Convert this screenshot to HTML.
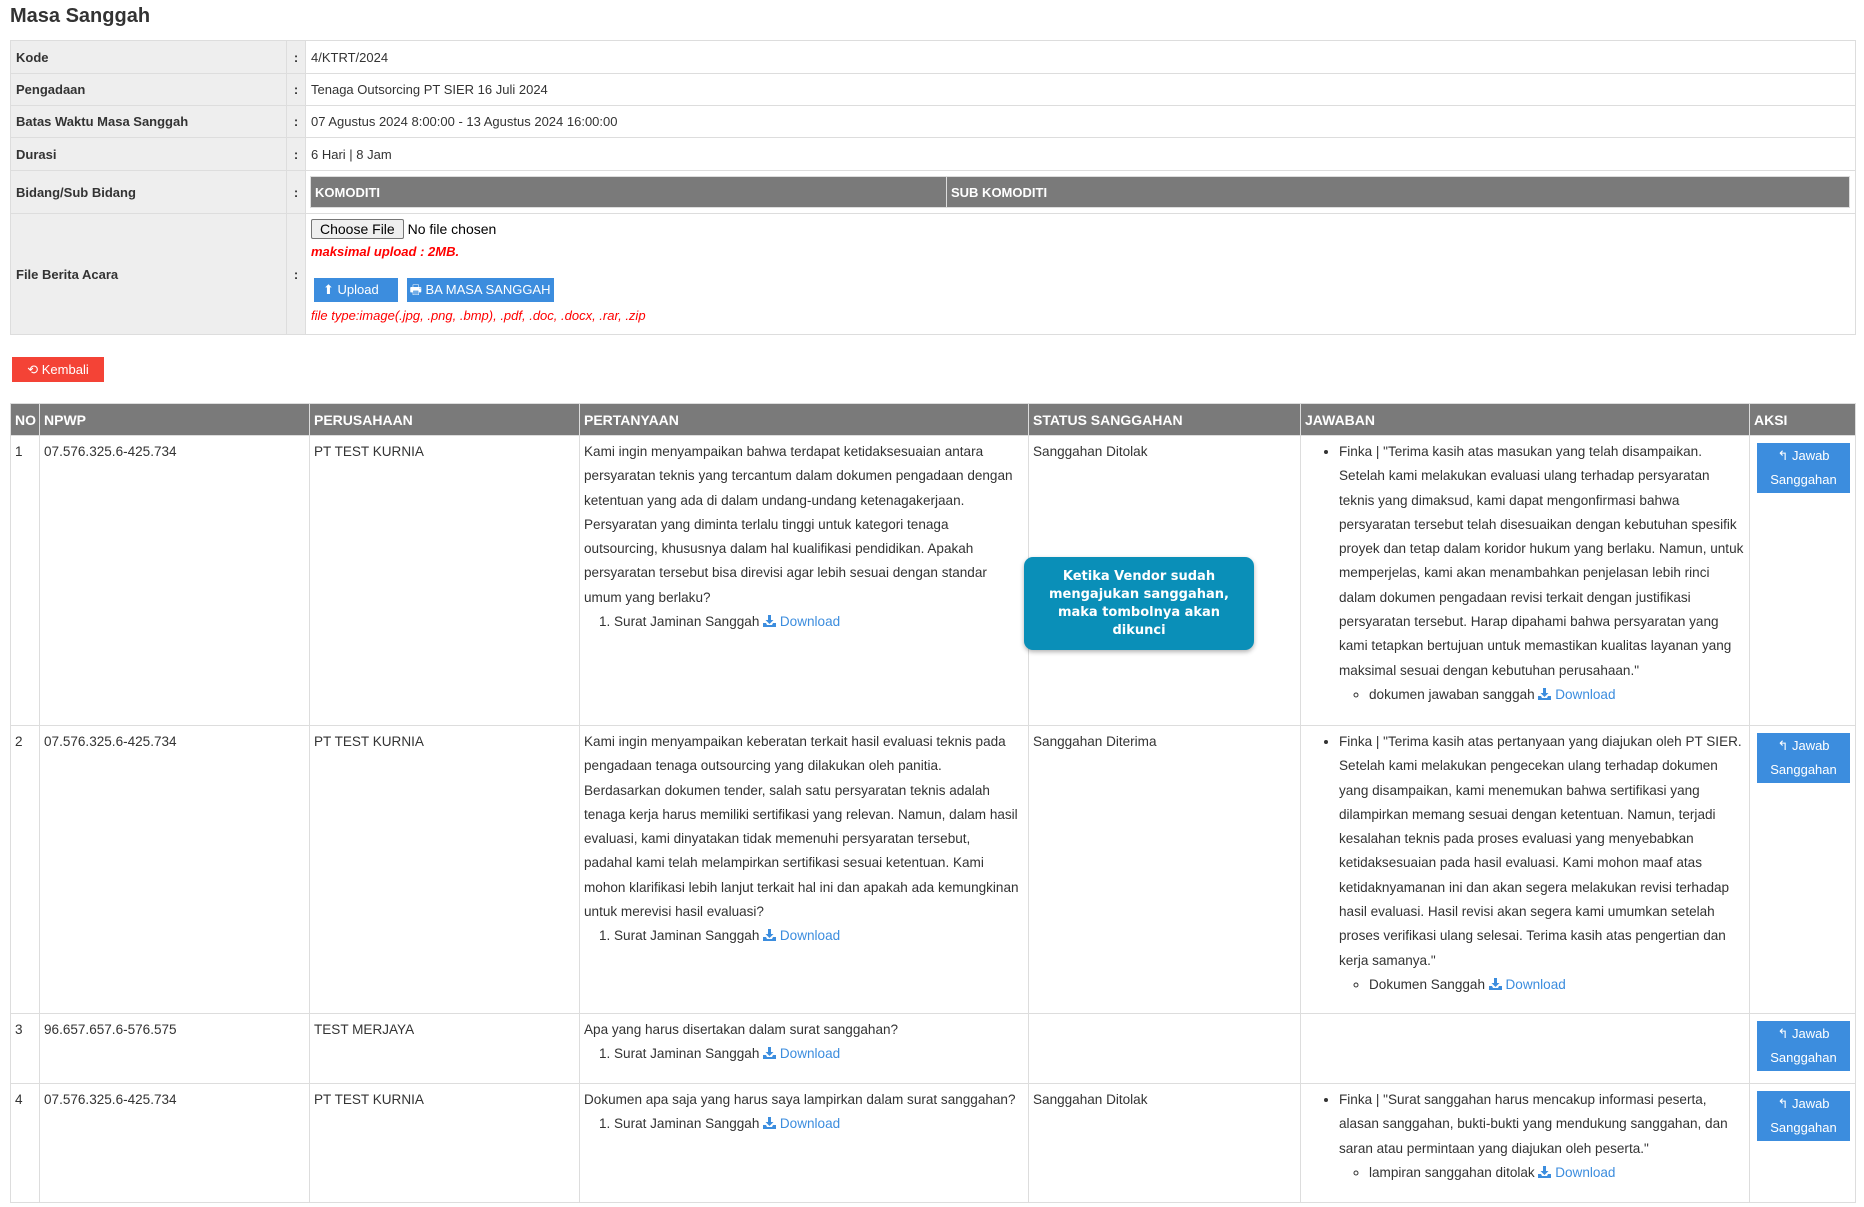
<!DOCTYPE html>
<html><head><meta charset="utf-8"><style>
*{box-sizing:border-box}
body{margin:0;background:#fff;font-family:"Liberation Sans",Arial,sans-serif;font-size:13px;color:#333;width:1864px;height:1207px;overflow:hidden;position:relative}
h3{position:absolute;left:10px;top:5px;margin:0;font-size:20px;font-weight:bold;color:#333}
table{border-collapse:collapse;table-layout:fixed}
.info{position:absolute;left:10px;top:40px;width:1846px}
.info td{border:1px solid #ddd;padding:0 5px;font-size:13px;vertical-align:middle}
.info td.l{background:#eee;font-weight:bold}
.info td.c{background:#eee;text-align:center;font-weight:bold;padding:0}
.kom{width:100%;border-collapse:collapse}
.kom td{background:#7a7a7a;color:#fff;font-weight:bold;height:31px;border:1px solid #ddd !important;padding:0 4px}
.btn{display:inline-block;background:#3c8dde;color:#fff;font-size:13px;height:24px;line-height:24px;padding:0 9px}
.main{position:absolute;left:10px;top:403px;width:1846px}
.main th{background:#7a7a7a;color:#fff;text-align:left;height:32px;padding:0 4px;font-size:14px;border:1px solid #ddd}
.main td{border:1px solid #ddd;vertical-align:top;padding:4px 4px;line-height:24.3px;font-size:13.55px}
ol,ul{margin:0}
ol{padding-left:30px}
ul{padding-left:34px}
ul ul{padding-left:30px;list-style:circle}
a{color:#3c8dde;text-decoration:none}
.jb{display:block;background:#3c8dde;color:#fff;text-align:center;line-height:24px;font-size:13px;width:93px;padding:1px 0;margin:3px 0 0 3px}
.di{display:inline-block;width:13px;height:12px;vertical-align:-1px}
</style></head><body>
<svg width="0" height="0" style="position:absolute"><symbol id="dl" viewBox="0 0 13 12"><path d="M5 0h3v5h2.5L6.5 9 2.5 5H5z" fill="#3c8dde"/><path d="M0 8h3l1 2h5l1-2h3v4H0z" fill="#3c8dde"/></symbol></svg>
<h3>Masa Sanggah</h3>
<table class="info">
<colgroup><col style="width:276px"><col style="width:19px"><col></colgroup>
<tr style="height:33px"><td class="l">Kode</td><td class="c">:</td><td>4/KTRT/2024</td></tr>
<tr style="height:32px"><td class="l">Pengadaan</td><td class="c">:</td><td>Tenaga Outsorcing PT SIER 16 Juli 2024</td></tr>
<tr style="height:32px"><td class="l">Batas Waktu Masa Sanggah</td><td class="c">:</td><td>07 Agustus 2024 8:00:00 - 13 Agustus 2024 16:00:00</td></tr>
<tr style="height:33px"><td class="l">Durasi</td><td class="c">:</td><td>6 Hari | 8 Jam</td></tr>
<tr style="height:43px"><td class="l">Bidang/Sub Bidang</td><td class="c">:</td><td style="padding:5px 5px 5px 4px"><table class="kom"><tr><td style="width:636px">KOMODITI</td><td>SUB KOMODITI</td></tr></table></td></tr>
<tr style="height:121px"><td class="l">File Berita Acara</td><td class="c">:</td><td style="vertical-align:top;padding-top:5px">
<div style="font-size:14px"><span style="display:inline-block;border:1px solid #767676;background:#efefef;border-radius:2px;padding:1px 8px;color:#000">Choose File</span> <span style="color:#000">No file chosen</span></div>
<div style="color:#f00;font-weight:bold;font-style:italic;margin-top:5px">maksimal upload : 2MB.</div>
<div style="margin-top:19px;padding-left:3px"><span class="btn" style="width:84px">⬆ Upload</span> <span class="btn" style="margin-left:5px;padding:0 3px">🖶 BA MASA SANGGAH</span></div>
<div style="color:#f00;font-style:italic;margin-top:6px">file type:image(.jpg, .png, .bmp), .pdf, .doc, .docx, .rar, .zip</div>
</td></tr>
</table>
<div style="position:absolute;left:12px;top:357px;width:92px;height:25px;background:#f44336;color:#fff;font-size:13px;line-height:25px;text-align:center">⟲ Kembali</div>
<table class="main">
<colgroup><col style="width:29px"><col style="width:270px"><col style="width:270px"><col style="width:449px"><col style="width:272px"><col style="width:449px"><col></colgroup>
<tr><th>NO</th><th>NPWP</th><th>PERUSAHAAN</th><th>PERTANYAAN</th><th>STATUS SANGGAHAN</th><th>JAWABAN</th><th>AKSI</th></tr>
<tr style="height:290px"><td>1</td><td>07.576.325.6-425.734</td><td>PT TEST KURNIA</td><td>Kami ingin menyampaikan bahwa terdapat ketidaksesuaian antara persyaratan teknis yang tercantum dalam dokumen pengadaan dengan ketentuan yang ada di dalam undang-undang ketenagakerjaan. Persyaratan yang diminta terlalu tinggi untuk kategori tenaga outsourcing, khususnya dalam hal kualifikasi pendidikan. Apakah persyaratan tersebut bisa direvisi agar lebih sesuai dengan standar umum yang berlaku?<ol><li>Surat Jaminan Sanggah <a><svg class="di"><use href="#dl"/></svg> Download</a></li></ol></td><td>Sanggahan Ditolak</td><td><ul><li>Finka | "Terima kasih atas masukan yang telah disampaikan. Setelah kami melakukan evaluasi ulang terhadap persyaratan teknis yang dimaksud, kami dapat mengonfirmasi bahwa persyaratan tersebut telah disesuaikan dengan kebutuhan spesifik proyek dan tetap dalam koridor hukum yang berlaku. Namun, untuk memperjelas, kami akan menambahkan penjelasan lebih rinci dalam dokumen pengadaan revisi terkait dengan justifikasi persyaratan tersebut. Harap dipahami bahwa persyaratan yang kami tetapkan bertujuan untuk memastikan kualitas layanan yang maksimal sesuai dengan kebutuhan perusahaan."<ul><li>dokumen jawaban sanggah <a><svg class="di"><use href="#dl"/></svg> Download</a></li></ul></li></ul></td><td><span class="jb">↰ Jawab<br>Sanggahan</span></td></tr>
<tr style="height:288px"><td>2</td><td>07.576.325.6-425.734</td><td>PT TEST KURNIA</td><td>Kami ingin menyampaikan keberatan terkait hasil evaluasi teknis pada<br>pengadaan tenaga outsourcing yang dilakukan oleh panitia.<br>Berdasarkan dokumen tender, salah satu persyaratan teknis adalah<br>tenaga kerja harus memiliki sertifikasi yang relevan. Namun, dalam hasil<br>evaluasi, kami dinyatakan tidak memenuhi persyaratan tersebut,<br>padahal kami telah melampirkan sertifikasi sesuai ketentuan. Kami<br>mohon klarifikasi lebih lanjut terkait hal ini dan apakah ada kemungkinan<br>untuk merevisi hasil evaluasi?<ol><li>Surat Jaminan Sanggah <a><svg class="di"><use href="#dl"/></svg> Download</a></li></ol></td><td>Sanggahan Diterima</td><td><ul><li>Finka | "Terima kasih atas pertanyaan yang diajukan oleh PT SIER. Setelah kami melakukan pengecekan ulang terhadap dokumen yang disampaikan, kami menemukan bahwa sertifikasi yang dilampirkan memang sesuai dengan ketentuan. Namun, terjadi kesalahan teknis pada proses evaluasi yang menyebabkan ketidaksesuaian pada hasil evaluasi. Kami mohon maaf atas ketidaknyamanan ini dan akan segera melakukan revisi terhadap hasil evaluasi. Hasil revisi akan segera kami umumkan setelah proses verifikasi ulang selesai. Terima kasih atas pengertian dan kerja samanya."<ul><li>Dokumen Sanggah <a><svg class="di"><use href="#dl"/></svg> Download</a></li></ul></li></ul></td><td><span class="jb">↰ Jawab<br>Sanggahan</span></td></tr>
<tr style="height:70px"><td>3</td><td>96.657.657.6-576.575</td><td>TEST MERJAYA</td><td>Apa yang harus disertakan dalam surat sanggahan?<ol><li>Surat Jaminan Sanggah <a><svg class="di"><use href="#dl"/></svg> Download</a></li></ol></td><td></td><td></td><td><span class="jb">↰ Jawab<br>Sanggahan</span></td></tr>
<tr style="height:119px"><td>4</td><td>07.576.325.6-425.734</td><td>PT TEST KURNIA</td><td>Dokumen apa saja yang harus saya lampirkan dalam surat sanggahan?<ol><li>Surat Jaminan Sanggah <a><svg class="di"><use href="#dl"/></svg> Download</a></li></ol></td><td>Sanggahan Ditolak</td><td><ul><li>Finka | "Surat sanggahan harus mencakup informasi peserta, alasan sanggahan, bukti-bukti yang mendukung sanggahan, dan saran atau permintaan yang diajukan oleh peserta."<ul><li>lampiran sanggahan ditolak <a><svg class="di"><use href="#dl"/></svg> Download</a></li></ul></li></ul></td><td><span class="jb">↰ Jawab<br>Sanggahan</span></td></tr>
</table>
<div style="position:absolute;left:1024px;top:557px;width:230px;height:93px;background:#0a8fb8;border-radius:9px;box-shadow:0 2px 5px rgba(0,0,0,.3);color:#fff;font-family:'DejaVu Sans',sans-serif;font-weight:bold;font-size:13px;line-height:18px;text-align:center;padding-top:11px">Ketika Vendor sudah<br>mengajukan sanggahan,<br>maka tombolnya akan<br>dikunci</div>
</body></html>
